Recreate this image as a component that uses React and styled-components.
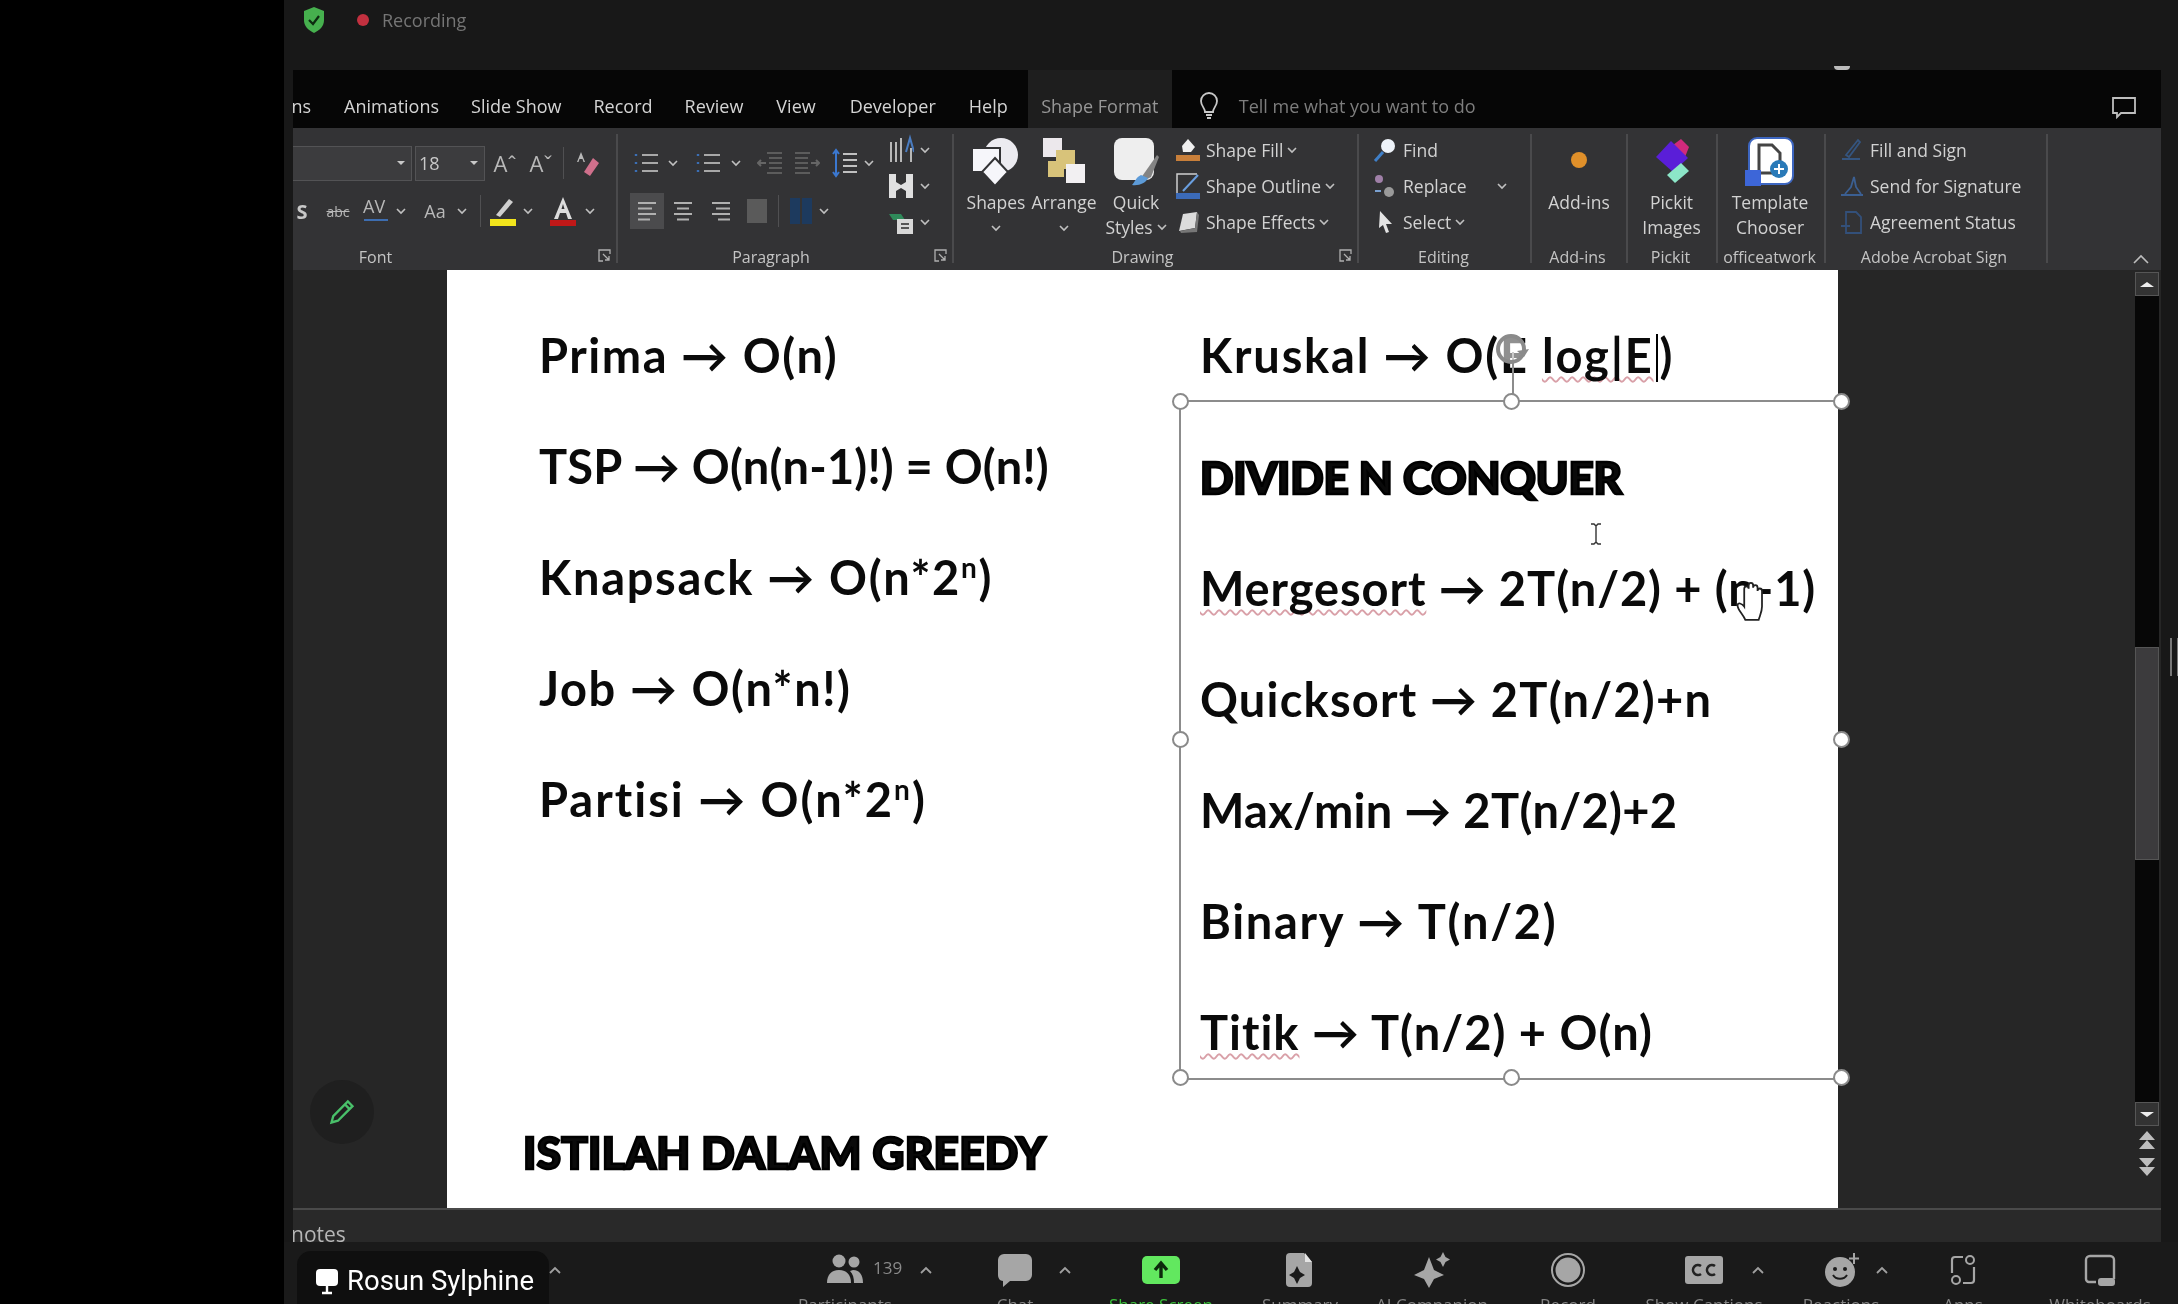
import React from "react";
import styled, { createGlobalStyle } from "styled-components";

const GlobalStyle = createGlobalStyle`
  html, body { margin: 0; padding: 0; background: #000; overflow: hidden; }
  #root { width: 2178px; height: 1304px; }
`;

const Screen = styled.div`
  position: relative;
  width: 2178px;
  height: 1304px;
  display: flex;
  overflow: hidden;
  background: #000;
  font-family: "Open Sans", "Liberation Sans", sans-serif;
  filter: blur(0.6px);
`;
const LeftBlack = styled.div`
  width: 284px;
  flex: none;
  background: #000;
`;
const Meeting = styled.div`
  width: 1894px;
  flex: none;
  display: flex;
  flex-direction: column;
  background: #181818;
`;
const TopBar = styled.div`
  height: 70px;
  flex: none;
  display: flex;
  align-items: flex-start;
  padding: 6px 0 0 18px;
  gap: 31px;
  box-sizing: border-box;
  position: relative;
`;
const RecBadge = styled.div`
  display: flex;
  align-items: center;
  gap: 13px;
  height: 28px;
  color: #757575;
  font-size: 18px;
`;
const RecDot = styled.span`
  width: 12px;
  height: 12px;
  border-radius: 50%;
  background: #c2303f;
`;
const Shield = styled.svg`
  width: 24px;
  height: 28px;
`;
const CamGlint = styled.span`
  position: absolute;
  left: 1550px;
  top: 66px;
  width: 16px;
  height: 4px;
  border-radius: 0 0 6px 6px;
  background: #bbb;
`;
const Window = styled.div`
  margin-left: 9px;
  width: 1868px;
  flex: none;
  display: flex;
  flex-direction: column;
`;
const TabRow = styled.div`
  height: 58px;
  background: #060606;
  display: flex;
  align-items: stretch;
  font-size: 18px;
  color: #d4d4d4;
  position: relative;
`;
const Tab = styled.div`
  margin-left: ${(p) => p.$ml || 0}px;
  padding-top: 14px;
  box-sizing: border-box;
  display: flex;
  align-items: center;
  white-space: nowrap;
  ${(p) => p.$w && `width: ${p.$w}px; justify-content: center;`}
  ${(p) => p.$active && "background: #1e1e1e; color: #969696;"}
  ${(p) => p.$dim && "color: #7d7d7d;"}
`;
const ClippedTab = styled(Tab)`
  width: 18px;
  overflow: hidden;
  justify-content: flex-end;
`;
const TabIcon = styled.svg`
  margin: 14px 0 0 ${(p) => p.$ml}px;
  align-self: center;
  width: ${(p) => p.$w || 24}px;
  height: 28px;
  flex: none;
`;
const Ribbon = styled.div`
  height: 142px;
  flex: none;
  background: #333335;
  display: flex;
  position: relative;
  color: #d6d6d6;
  font-size: 17.5px;
`;
const Group = styled.div`
  width: ${(p) => p.$w}px;
  flex: none;
  box-sizing: border-box;
  display: flex;
  flex-direction: column;
  position: relative;
  ${(p) =>
    !p.$end &&
    `&::after { content: ""; position: absolute; right: 0; top: 6px; bottom: 7px; width: 2px; background: #4a4a4c; }`}
`;
const GroupBody = styled.div`
  height: 117px;
  flex: none;
  display: flex;
  padding-left: ${(p) => p.$pl || 0}px;
  box-sizing: border-box;
`;
const GroupLabel = styled.div`
  text-align: center;
  font-size: 16px;
  line-height: 24px;
  color: #c4c4c4;
  padding-right: ${(p) => p.$pr || 0}px;
  white-space: nowrap;
`;
const Launcher = styled.svg`
  position: absolute;
  right: 7px;
  bottom: 8px;
  width: 13px;
  height: 13px;
`;
const Stack = styled.div`
  display: flex;
  flex-direction: column;
  margin-left: ${(p) => p.$ml || 0}px;
  padding-top: ${(p) => p.$pt ?? 17}px;
  gap: ${(p) => p.$gap ?? 12}px;
`;
const Row = styled.div`
  display: flex;
  align-items: center;
  height: ${(p) => p.$h || 36}px;
`;
const SelectBox = styled.div`
  width: ${(p) => p.$w}px;
  height: 35px;
  margin-left: ${(p) => p.$ml || 0}px;
  box-sizing: border-box;
  background: #3c3c3e;
  border: 1px solid #535355;
  border-left: ${(p) => (p.$open ? "none" : "1px solid #535355")};
  display: flex;
  align-items: center;
  justify-content: space-between;
  padding: 0 6px 0 3px;
  font-size: 18px;
  color: #c8c8c8;
`;
const TriDown = styled.span`
  margin-left: auto;
  width: 0;
  height: 0;
  border-left: 4px solid transparent;
  border-right: 4px solid transparent;
  border-top: 4px solid #c8c8c8;
`;
const Tool = styled.div`
  width: ${(p) => p.$w}px;
  margin-left: ${(p) => p.$ml || 0}px;
  height: 36px;
  flex: none;
  display: flex;
  align-items: center;
  justify-content: center;
  color: ${(p) => p.$color || "#b8b8b8"};
  font-size: ${(p) => p.$fs || 18}px;
  font-weight: ${(p) => p.$fw || 400};
  ${(p) => p.$on && "background: #4b4b4d;"}
  white-space: nowrap;
`;
const MiniSep = styled.span`
  width: 1px;
  height: 32px;
  margin-left: ${(p) => p.$ml || 0}px;
  background: #505052;
  flex: none;
`;
const Big = styled.div`
  width: ${(p) => p.$w}px;
  margin-left: ${(p) => p.$ml || 0}px;
  flex: none;
  display: flex;
  flex-direction: column;
  align-items: center;
  padding-top: 9px;
  line-height: 25px;
  color: #d2d2d2;
`;
const BigIcon = styled.svg`
  width: ${(p) => p.$s || 50}px;
  height: 50px;
  margin-bottom: 3px;
  flex: none;
`;
const InlineRow = styled.span`
  display: flex;
  align-items: center;
  gap: 4px;
  white-space: nowrap;
`;
const ListItem = styled.div`
  display: flex;
  align-items: center;
  height: 26px;
  white-space: nowrap;
  color: ${(p) => p.$color || "#d2d2d2"};
`;
const ListIcon = styled.svg`
  width: 24px;
  height: 26px;
  margin-right: ${(p) => p.$mr ?? 6}px;
  flex: none;
`;
const Chevron = styled.svg`
  width: 10px;
  height: 7px;
  flex: none;
  margin-left: ${(p) => p.$ml || 0}px;
  margin-top: ${(p) => p.$mt || 0}px;
`;
const CollapseBtn = styled.svg`
  position: absolute;
  right: 12px;
  bottom: 6px;
  width: 16px;
  height: 10px;
`;
const Workspace = styled.div`
  height: 938px;
  flex: none;
  display: flex;
  background: #262626;
  position: relative;
`;
const Slide = styled.div`
  margin-left: 154px;
  width: 1391px;
  height: 938px;
  flex: none;
  position: relative;
  background: #fff;
  display: grid;
  grid-template-columns: 706px 1fr;
  padding-top: 30px;
  box-sizing: border-box;
  color: #0a0a0a;
  font-family: "Lato", "DejaVu Sans", sans-serif;
`;
const Column = styled.div`
  padding-left: ${(p) => p.$pl}px;
  display: flex;
  flex-direction: column;
`;
const Line = styled.div`
  height: 111px;
  line-height: 111px;
  font-size: 47px;
  font-weight: 700;
  letter-spacing: ${(p) => 1.2 + (p.$ls || 0)}px;
  white-space: nowrap;
  sup {
    font-size: 28px;
    line-height: 0;
  }
`;
const Heading = styled.div`
  height: 111px;
  line-height: 111px;
  font-size: 44px;
  font-weight: 900;
  letter-spacing: ${(p) => p.$ls ?? -0.2}px;
  -webkit-text-stroke: 2.5px #000;
  white-space: nowrap;
  margin: ${(p) => p.$mt || 0}px 0 0 ${(p) => p.$ml || 0}px;
`;
const Squiggle = styled.span`
  text-decoration: underline wavy #d9a0a8 2px;
  text-underline-offset: 3px;
  text-decoration-skip-ink: none;
`;
const Caret = styled.span`
  display: inline-block;
  width: 2px;
  height: 48px;
  background: #000;
  vertical-align: -9px;
  margin: 0 2px;
`;
const Selection = styled.div`
  position: absolute;
  left: 732px;
  top: 130px;
  width: 663px;
  height: 680px;
  box-sizing: border-box;
  border: 2px solid #8c8c8c;
  border-right: none;
  pointer-events: none;
`;
const Handle = styled.span`
  position: absolute;
  left: ${(p) => p.$x}%;
  top: ${(p) => p.$y}%;
  width: 17px;
  height: 17px;
  margin: -9px 0 0 -9px;
  box-sizing: border-box;
  border-radius: 50%;
  background: #fff;
  border: 2.5px solid #8a8a8a;
`;
const RotateStem = styled.span`
  position: absolute;
  left: 50%;
  top: -50px;
  width: 2px;
  height: 48px;
  background: #8c8c8c;
`;
const RotateIcon = styled.svg`
  position: absolute;
  left: calc(50% - 19px);
  top: -71px;
  width: 38px;
  height: 38px;
`;
const CursorIcon = styled.svg`
  position: absolute;
  left: ${(p) => p.$x}px;
  top: ${(p) => p.$y}px;
  width: ${(p) => p.$w}px;
  height: ${(p) => p.$h}px;
`;
const Scrollbar = styled.div`
  margin-left: 297px;
  width: 24px;
  flex: none;
  display: flex;
  flex-direction: column;
  padding-top: 2px;
`;
const ScrollBtn = styled.div`
  height: 24px;
  box-sizing: border-box;
  flex: none;
  background: #333;
  border: 1px solid #565656;
  display: flex;
  align-items: center;
  justify-content: center;
  &::before {
    content: "";
    border-left: 7px solid transparent;
    border-right: 7px solid transparent;
    ${(p) => (p.$down ? "border-top: 5px solid #eee;" : "border-bottom: 5px solid #eee;")}
  }
`;
const ScrollTrack = styled.div`
  flex: none;
  height: 806px;
  background: #070707;
  padding-top: 351px;
  box-sizing: border-box;
`;
const ScrollThumb = styled.div`
  height: 213px;
  box-sizing: border-box;
  background: #3c3b3d;
  border: 1px solid #555;
`;
const PageJump = styled.svg`
  width: 24px;
  height: 22px;
  margin-top: ${(p) => p.$mt}px;
  flex: none;
`;
const Grip = styled.span`
  position: absolute;
  left: 1877px;
  top: 368px;
  width: 5px;
  height: 38px;
  border-left: 2px solid #777;
  border-right: 2px solid #777;
`;
const Notes = styled.div`
  height: 34px;
  flex: none;
  box-sizing: border-box;
  background: #292929;
  border-top: 2px solid #4a4a4a;
  font-size: 21px;
  line-height: 48px;
  text-indent: -2px;
  color: #b6b6b6;
  overflow: hidden;
  white-space: nowrap;
`;
const Toolbar = styled.div`
  height: 62px;
  flex: none;
  background: #1a1a1a;
  display: flex;
  padding-left: 16px;
`;
const ToolItem = styled.div`
  width: ${(p) => p.$w}px;
  margin-left: ${(p) => p.$ml || 0}px;
  flex: none;
  position: relative;
  display: flex;
  flex-direction: column;
  align-items: center;
  padding-top: 10px;
  color: ${(p) => (p.$green ? "#3cc43c" : "#858585")};
  font-size: 17px;
  line-height: 24px;
  white-space: nowrap;
`;
const ToolIcon = styled.svg`
  width: 40px;
  height: 36px;
  margin-bottom: 5px;
  flex: none;
`;
const ToolCaret = styled.svg`
  position: absolute;
  left: ${(p) => p.$x - 6}px;
  top: 24px;
  width: 12px;
  height: 8px;
`;
const ToolCount = styled.span`
  position: absolute;
  left: 88px;
  top: 14px;
  font-size: 17px;
  line-height: 24px;
  color: #8a8a8a;
`;
const NameTag = styled.div`
  position: absolute;
  left: 297px;
  top: 1251px;
  width: 252px;
  height: 53px;
  box-sizing: border-box;
  padding: 6px 0 0 18px;
  border-radius: 14px 14px 0 0;
  background: #0f0f0f;
  display: flex;
  align-items: center;
  gap: 8px;
  color: #fff;
  font-family: "Roboto", sans-serif;
  font-size: 27.500px;
`;
const NameIcon = styled.svg`
  width: 24px;
  height: 30px;
  flex: none;
`;
const PenButton = styled.div`
  position: absolute;
  left: 310px;
  top: 1080px;
  width: 64px;
  height: 64px;
  border-radius: 50%;
  background: #1f1f1f;
  display: flex;
  align-items: center;
  justify-content: center;
`;

const Chev = ({ ml, mt, up }) => (
  <Chevron $ml={ml} $mt={mt} viewBox="0 0 10 7">
    <path d={up ? "M1 6l4-4 4 4" : "M1 1l4 4 4-4"} fill="none" stroke="#c0c0c0" strokeWidth="1.6" />
  </Chevron>
);

const LauncherIcon = () => (
  <Launcher viewBox="0 0 13 13">
    <path d="M12 5V1H1v11h4M5 5l6 6M7 11h4V7" fill="none" stroke="#b0b0b0" strokeWidth="1.3" />
  </Launcher>
);

const Lines = ({ color = "#b0b0b0", rows, w = 26 }) => (
  <svg width={w} height="26" viewBox={`0 0 ${w} 26`}>
    {rows.map(([x1, x2], i) => (
      <rect key={i} x={x1} y={4 + i * 5.5} width={x2 - x1} height="2" fill={color} />
    ))}
  </svg>
);

const BulletList = ({ dots }) => (
  <svg width="26" height="26" viewBox="0 0 26 26">
    <path d="M8 5h16M8 13h16M8 21h16" stroke="#a8a8a8" strokeWidth="2" />
    <path d="M2 4v2M2 12v2M2 20v2" stroke={dots} strokeWidth="2.4" />
  </svg>
);

const IndentIcon = ({ flip }) => (
  <svg width="26" height="26" viewBox="0 0 26 26" style={flip ? { transform: "scaleX(-1)" } : undefined}>
    <path d="M10 3h15M12 8h13M12 13h13M12 18h13M10 23h15" stroke="#5c5c5c" strokeWidth="2" />
    <path d="M9 13H1m3-3l-3 3 3 3" fill="none" stroke="#666" strokeWidth="2" />
  </svg>
);

const ToolIconSvg = ({ name }) => {
  const c = "#a6a6a6";
  switch (name) {
    case "mic":
      return (
        <ToolIcon viewBox="0 0 40 36">
          <rect x="14" y="3" width="12" height="24" rx="6" fill="#666" />
          <path d="M10 32L30 2" stroke="#a02030" strokeWidth="2" />
        </ToolIcon>
      );
    case "video":
      return (
        <ToolIcon viewBox="0 0 40 36">
          <rect x="4" y="8" width="24" height="22" rx="4" fill="#666" />
          <path d="M8 34L34 2" stroke="#a02030" strokeWidth="2" />
        </ToolIcon>
      );
    case "people":
      return (
        <ToolIcon viewBox="0 0 40 36">
          <circle cx="14" cy="9" r="6.5" fill={c} />
          <circle cx="29" cy="10" r="5.5" fill={c} />
          <path d="M2 31c0-9 5-13 12-13s12 4 12 13z" fill={c} />
          <path d="M28 18c6 0 10 4 10 13h-9c0-5-1-9-4-12z" fill={c} />
        </ToolIcon>
      );
    case "chat":
      return (
        <ToolIcon viewBox="0 0 40 36">
          <path d="M9 2h22a6 6 0 016 6v15a6 6 0 01-6 6H15l-7 6v-6a6 6 0 01-5-6V8a6 6 0 016-6z" fill={c} />
        </ToolIcon>
      );
    case "share":
      return (
        <ToolIcon viewBox="0 0 40 36">
          <rect x="1" y="4" width="38" height="28" rx="5" fill="#62e85f" />
          <path d="M20 26V12m-6 6l6-7 6 7" fill="none" stroke="#0c2a0c" strokeWidth="3.4" />
        </ToolIcon>
      );
    case "summary":
      return (
        <ToolIcon viewBox="0 0 40 36">
          <path d="M10 1h14l8 9v21a4 4 0 01-4 4H10a4 4 0 01-4-4V5a4 4 0 014-4z" fill={c} />
          <path d="M25 1l7 9h-7z" fill="#e4e4e4" />
          <path d="M17 14l3 6 5 3-5 3-3 6-3-6-5-3 5-3z" fill="#1a1a1a" />
        </ToolIcon>
      );
    case "ai":
      return (
        <ToolIcon viewBox="0 0 40 36">
          <path d="M17 5l5 13 10 5-10 4-5 9-5-9-10-4 10-5z" fill={c} />
          <path d="M31 0l2.5 5L38 7.5 33.5 10 31 15l-2.5-5L24 7.500l4.500-2.500z" fill={c} />
        </ToolIcon>
      );
    case "record":
      return (
        <ToolIcon viewBox="0 0 40 36">
          <circle cx="20" cy="18" r="16" fill="none" stroke={c} strokeWidth="2" />
          <circle cx="20" cy="18" r="12.500" fill={c} />
        </ToolIcon>
      );
    case "cc":
      return (
        <ToolIcon viewBox="0 0 40 36">
          <rect x="1" y="4" width="38" height="28" rx="3" fill={c} />
          <path d="M17 14a5 5 0 100 8M31 14a5 5 0 100 8" fill="none" stroke="#222" strokeWidth="2.600" />
        </ToolIcon>
      );
    case "smile":
      return (
        <ToolIcon viewBox="0 0 40 36">
          <circle cx="19" cy="20" r="15" fill={c} />
          <circle cx="14" cy="17" r="2" fill="#1a1a1a" />
          <circle cx="24" cy="17" r="2" fill="#1a1a1a" />
          <path d="M12 23c3 5 11 5 14 0" fill="none" stroke="#1a1a1a" strokeWidth="2" />
          <path d="M33 1v11M28 6.500h10" stroke={c} strokeWidth="2" />
        </ToolIcon>
      );
    case "apps":
      return (
        <ToolIcon viewBox="0 0 40 36">
          <path d="M9 21V8a3 3 0 013-3h8M31 15v13a3 3 0 01-3 3h-8" fill="none" stroke={c} strokeWidth="2.200" />
          <circle cx="27" cy="8" r="4" fill="none" stroke={c} strokeWidth="2" />
          <circle cx="13" cy="28" r="4" fill="none" stroke={c} strokeWidth="2" />
        </ToolIcon>
      );
    default:
      return (
        <ToolIcon viewBox="0 0 40 36">
          <path d="M6 27V8a4 4 0 014-4h20a4 4 0 014 4v19" fill="none" stroke={c} strokeWidth="2.400" />
          <path d="M6 27a3 3 0 003 3h7" fill="none" stroke={c} strokeWidth="2.400" />
          <rect x="18" y="26" width="17" height="8" rx="3" fill={c} />
        </ToolIcon>
      );
  }
};

const bottomTools = [
  { label: "Unmute", icon: "mic", w: 110 },
  { label: "Start Video", icon: "video", w: 100, ml: 38, caret: 107 },
  { label: "Participants", icon: "people", w: 120, ml: 237, caret: 141, count: "139" },
  { label: "Chat", icon: "chat", w: 80, ml: 70, caret: 90 },
  { label: "Share Screen", icon: "share", w: 130, ml: 41, green: true },
  { label: "Summary", icon: "summary", w: 100, ml: 24 },
  { label: "AI Companion", icon: "ai", w: 140, ml: 12 },
  { label: "Record", icon: "record", w: 90, ml: 21 },
  { label: "Show Captions", icon: "cc", w: 130, ml: 26, caret: 119 },
  { label: "Reactions", icon: "smile", w: 110, ml: 17, caret: 96 },
  { label: "Apps", icon: "apps", w: 70, ml: 32 },
  { label: "Whiteboards", icon: "board", w: 130, ml: 37 },
];

const App = () => {
  return (
    <Screen>
      <GlobalStyle />
      <LeftBlack />
      <Meeting>
        <TopBar>
          <Shield viewBox="0 0 24 28">
            <path d="M12 1l10 4v9c0 6-4 10-10 13C6 24 2 20 2 14V5z" fill="#46b04e" />
            <path d="M7 14l4 4 6-8" fill="none" stroke="#0d2b10" strokeWidth="2.200" />
          </Shield>
          <RecBadge>
            <RecDot />
            Recording
          </RecBadge>
          <CamGlint />
        </TopBar>
        <Window>
          <TabRow>
            <ClippedTab>ns</ClippedTab>
            <Tab $ml={33}>Animations</Tab>
            <Tab $ml={32}>Slide Show</Tab>
            <Tab $ml={32}>Record</Tab>
            <Tab $ml={32}>Review</Tab>
            <Tab $ml={33}>View</Tab>
            <Tab $ml={34}>Developer</Tab>
            <Tab $ml={33}>Help</Tab>
            <Tab $ml={20} $w={144} $active>
              Shape Format
            </Tab>
            <TabIcon $ml={25} viewBox="0 0 24 28">
              <path
                d="M8 20c0-4-4-6-4-11a8 8 0 0116 0c0 5-4 7-4 11zM9 23h6M10 26h4"
                fill="none"
                stroke="#c8c8c8"
                strokeWidth="1.800"
              />
            </TabIcon>
            <Tab $ml={18} $dim>
              Tell me what you want to do
            </Tab>
            <TabIcon $ml={636} $w={26} viewBox="0 0 26 28">
              <path d="M2 6h22v15H10l-4 4v-4H2z" fill="none" stroke="#bdbdbd" strokeWidth="1.800" />
            </TabIcon>
          </TabRow>
          <Ribbon>
            <Group $w={325}>
              <GroupBody>
                <Stack>
                  <Row>
                    <SelectBox $w={119} $open>
                      <TriDown />
                    </SelectBox>
                    <SelectBox $w={70} $ml={3}>
                      18
                      <TriDown />
                    </SelectBox>
                    <Tool $w={36} $ml={2} $fs={22}>
                      Aˆ
                    </Tool>
                    <Tool $w={36} $fs={22}>
                      Aˇ
                    </Tool>
                    <MiniSep $ml={4} />
                    <Tool $w={46}>
                      <svg width="26" height="30" viewBox="0 0 26 30">
                        <path d="M10 24l9-14 6 5-9 13z" fill="#d0708c" />
                        <path d="M7 4L3 14h1.500l1-3h3l1 3H11z" fill="#b8b8b8" />
                      </svg>
                    </Tool>
                  </Row>
                  <Row>
                    <Tool $w={18} $fw={700} $fs={20} $color="#c8c8c8">
                      S
                    </Tool>
                    <Tool $w={36} $ml={9} $fs={14}>
                      <s>abc</s>
                    </Tool>
                    <Tool $w={40}>
                      <svg width="30" height="30" viewBox="0 0 30 30">
                        <text x="2" y="17" fontSize="18" fill="#b8b8b8" fontFamily="Open Sans">
                          AV
                        </text>
                        <path d="M3 24h24" stroke="#3d6db0" strokeWidth="2" />
                      </svg>
                    </Tool>
                    <Chev />
                    <Tool $w={44} $ml={7}>
                      Aa
                    </Tool>
                    <Chev />
                    <MiniSep $ml={13} />
                    <Tool $w={36} $ml={4}>
                      <svg width="28" height="32" viewBox="0 0 28 32">
                        <path d="M7 20L20 4l4 3-13 15z" fill="#cfcfcf" />
                        <rect x="1" y="24" width="26" height="7" fill="#f2e51c" />
                      </svg>
                    </Tool>
                    <Chev ml={2} />
                    <Tool $w={36} $ml={12} $fs={26} $color="#ddd">
                      <svg width="28" height="32" viewBox="0 0 28 32">
                        <path d="M14 2L5 24h4l2-6h6l2 6h4zM12.500 14L14 9l1.500 5z" fill="#dcdcdc" />
                        <rect x="1" y="25" width="26" height="6" fill="#c01818" />
                      </svg>
                    </Tool>
                    <Chev ml={4} />
                  </Row>
                </Stack>
              </GroupBody>
              <GroupLabel $pr={160}>Font</GroupLabel>
              <LauncherIcon />
            </Group>
            <Group $w={336}>
              <GroupBody $pl={14}>
                <Stack>
                  <Row>
                    <Tool $w={30}>
                      <BulletList dots="#3b6fb5" />
                    </Tool>
                    <Chev ml={6} />
                    <Tool $w={30} $ml={16}>
                      <BulletList dots="#3b6fb5" />
                    </Tool>
                    <Chev ml={7} />
                    <Tool $w={30} $ml={14}>
                      <IndentIcon />
                    </Tool>
                    <Tool $w={30} $ml={7}>
                      <IndentIcon flip />
                    </Tool>
                    <Tool $w={30} $ml={8}>
                      <svg width="26" height="30" viewBox="0 0 26 30">
                        <path d="M11 6h14M11 12h14M11 18h14M11 24h14" stroke="#c0c0c0" strokeWidth="2" />
                        <path d="M4 3v24M1 6l3-4 3 4M1 24l3 4 3-4" fill="none" stroke="#3b78d0" strokeWidth="2" />
                      </svg>
                    </Tool>
                    <Chev ml={4} />
                  </Row>
                  <Row>
                    <Tool $w={34} $on $ml={-2}>
                      <Lines rows={[[4, 22], [4, 18], [4, 22], [4, 16]]} />
                    </Tool>
                    <Tool $w={30} $ml={4}>
                      <Lines rows={[[4, 22], [7, 19], [4, 22], [7, 19]]} />
                    </Tool>
                    <Tool $w={30} $ml={8}>
                      <Lines rows={[[4, 22], [8, 22], [4, 22], [10, 22]]} />
                    </Tool>
                    <Tool $w={24} $ml={9}>
                      <svg width="20" height="24" viewBox="0 0 20 24">
                        <rect width="20" height="24" fill="#5a5a5a" />
                      </svg>
                    </Tool>
                    <MiniSep $ml={9} />
                    <Tool $w={24} $ml={10}>
                      <svg width="22" height="26" viewBox="0 0 22 26">
                        <rect width="10" height="26" fill="#1d3a5e" />
                        <rect x="12" width="10" height="26" fill="#1d3a5e" />
                      </svg>
                    </Tool>
                    <Chev ml={6} />
                  </Row>
                </Stack>
                <Stack $ml={14} $pt={4} $gap={0}>
                  <Row>
                    <Tool $w={26} $ml={0}>
                      <svg width="26" height="32" viewBox="0 0 26 32">
                        <path d="M3 8v20M8 8v20M13 4v24M23 14v14" stroke="#b8b8b8" strokeWidth="2" />
                        <path d="M18 18L22 4l4 14" fill="none" stroke="#4a7cc0" strokeWidth="2" />
                      </svg>
                    </Tool>
                    <Chev ml={6} />
                  </Row>
                  <Row>
                    <Tool $w={26}>
                      <svg width="26" height="28" viewBox="0 0 26 28">
                        <path d="M1 2h7v8l5 3 5-3V2h7v24h-7v-7l-5-3-5 3v7H1z" fill="#e0e0e0" />
                      </svg>
                    </Tool>
                    <Chev ml={6} />
                  </Row>
                  <Row>
                    <Tool $w={26}>
                      <svg width="26" height="28" viewBox="0 0 26 28">
                        <path d="M1 6h12l4 6H5z" fill="#2f8a5a" />
                        <rect x="9" y="11" width="16" height="15" fill="#d8d8d8" />
                        <path d="M13 16h8M13 20h8" stroke="#555" strokeWidth="2" />
                      </svg>
                    </Tool>
                    <Chev ml={6} />
                  </Row>
                </Stack>
              </GroupBody>
              <GroupLabel $pr={30}>Paragraph</GroupLabel>
              <LauncherIcon />
            </Group>
            <Group $w={405}>
              <GroupBody $pl={12}>
                <Big $w={60}>
                  <BigIcon viewBox="0 0 50 50">
                    <circle cx="30" cy="18" r="17" fill="#ecebf0" />
                    <path d="M1 11h28v24H1z" fill="#f6f6fa" stroke="#333335" strokeWidth="2" />
                    <path d="M24 21l13 14-13 14-13-14z" fill="#f6f6fa" stroke="#333335" strokeWidth="2" />
                  </BigIcon>
                  Shapes
                  <Chev mt={10} />
                </Big>
                <Big $w={70} $ml={3}>
                  <BigIcon viewBox="0 0 50 50">
                    <rect x="4" y="1" width="19" height="19" fill="#ece8ec" />
                    <rect x="17" y="13" width="19" height="19" fill="#d8c37a" />
                    <rect x="9" y="24" width="16" height="16" fill="#d8c37a" />
                    <rect x="27" y="27" width="19" height="19" fill="#f2f0f2" />
                  </BigIcon>
                  Arrange
                  <Chev mt={10} />
                </Big>
                <Big $w={74}>
                  <BigIcon viewBox="0 0 50 50">
                    <rect x="3" y="1" width="40" height="42" rx="8" fill="#eeeeee" />
                    <path d="M46 18L32 38l-7 10 15-8 8-20z" fill="#848484" />
                    <path d="M30 38c-5 2-6 7-9 10 7 1 14-2 16-7z" fill="#5d9bd8" />
                  </BigIcon>
                  Quick
                  <InlineRow>
                    Styles
                    <Chev />
                  </InlineRow>
                </Big>
                <Stack $ml={3} $pt={9} $gap={10}>
                  <ListItem>
                    <ListIcon viewBox="0 0 24 26">
                      <path d="M12 2l7 8-4 5H7l-1-6z" fill="#f0f0f0" />
                      <rect x="0" y="18" width="24" height="6" fill="#c87f3a" />
                    </ListIcon>
                    <InlineRow>
                      Shape Fill
                      <Chev />
                    </InlineRow>
                  </ListItem>
                  <ListItem>
                    <ListIcon viewBox="0 0 24 26">
                      <path d="M1 20V1h20" fill="none" stroke="#cfcfcf" strokeWidth="1.500" />
                      <path d="M7 18L22 2" stroke="#6a9fe0" strokeWidth="2" />
                      <rect x="0" y="20" width="24" height="6" fill="#3b6ab8" />
                    </ListIcon>
                    <InlineRow>
                      Shape Outline
                      <Chev />
                    </InlineRow>
                  </ListItem>
                  <ListItem>
                    <ListIcon viewBox="0 0 24 26">
                      <path d="M7 5l14-2-2 16-16 3z" fill="#dcdcdc" />
                      <path d="M4 22l15-3 2-16 2 3-2 17-16 1z" fill="#777" />
                    </ListIcon>
                    <InlineRow>
                      Shape Effects
                      <Chev />
                    </InlineRow>
                  </ListItem>
                </Stack>
              </GroupBody>
              <GroupLabel $pr={28}>Drawing</GroupLabel>
              <LauncherIcon />
            </Group>
            <Group $w={173}>
              <GroupBody $pl={14}>
                <Stack $pt={9} $gap={10}>
                  <ListItem>
                    <ListIcon viewBox="0 0 24 26">
                      <circle cx="15" cy="9" r="7" fill="#eef3fa" />
                      <path d="M10 15L2 24" stroke="#3f7fc8" strokeWidth="3" />
                    </ListIcon>
                    Find
                  </ListItem>
                  <ListItem>
                    <ListIcon viewBox="0 0 24 26">
                      <circle cx="6" cy="6" r="4" fill="#a080a8" />
                      <path d="M2 18h6" stroke="#7aa0d0" strokeWidth="2" />
                      <circle cx="16" cy="19" r="5" fill="#9a9a9a" />
                    </ListIcon>
                    Replace
                    <Chev ml={30} />
                  </ListItem>
                  <ListItem>
                    <ListIcon viewBox="0 0 24 26">
                      <path d="M7 2l12 13h-6l3 8-3 1-3-8-4 3z" fill="#e4e4e4" />
                    </ListIcon>
                    <InlineRow>
                      Select
                      <Chev />
                    </InlineRow>
                  </ListItem>
                </Stack>
              </GroupBody>
              <GroupLabel $pr={4}>Editing</GroupLabel>
            </Group>
            <Group $w={96}>
              <GroupBody>
                <Big $w={94}>
                  <BigIcon viewBox="0 0 50 50">
                    <circle cx="25" cy="23" r="8" fill="#e0902a" />
                  </BigIcon>
                  Add-ins
                </Big>
              </GroupBody>
              <GroupLabel $pr={5}>Add-ins</GroupLabel>
            </Group>
            <Group $w={90}>
              <GroupBody>
                <Big $w={87}>
                  <BigIcon viewBox="0 0 50 50">
                    <path d="M26 8l8-6 8 8-4 10z" fill="#d02a7c" />
                    <path d="M24 4l17 17-15 14L9 20z" fill="#5a1ed8" />
                    <path d="M34 26l8 8-14 12-8-8z" fill="#8ce6c8" />
                  </BigIcon>
                  Pickit
                  <span>Images</span>
                </Big>
              </GroupBody>
              <GroupLabel $pr={5}>Pickit</GroupLabel>
            </Group>
            <Group $w={108}>
              <GroupBody>
                <Big $w={104}>
                  <BigIcon viewBox="0 0 50 50">
                    <rect x="4" y="1" width="44" height="46" rx="8" fill="#fff" stroke="#3d66c0" strokeWidth="2" />
                    <path d="M14 8h13l8 8v20H14z" fill="none" stroke="#444" strokeWidth="3" />
                    <circle cx="34" cy="32" r="9" fill="#2a7ab8" />
                    <path d="M34 27v10M29 32h10" stroke="#fff" strokeWidth="2" />
                    <rect x="0" y="33" width="16" height="16" fill="#3d66d8" />
                  </BigIcon>
                  Template
                  <span>Chooser</span>
                </Big>
              </GroupBody>
              <GroupLabel $pr={5}>officeatwork</GroupLabel>
            </Group>
            <Group $w={222}>
              <GroupBody $pl={14}>
                <Stack $pt={9} $gap={10}>
                  <ListItem>
                    <ListIcon viewBox="0 0 24 26">
                      <path d="M2 22h18M6 18L18 3l2 2L9 20z" fill="none" stroke="#35557f" strokeWidth="1.800" />
                    </ListIcon>
                    Fill and Sign
                  </ListItem>
                  <ListItem>
                    <ListIcon viewBox="0 0 24 26">
                      <path d="M1 22h22M5 21l6-7 3-10 2 10 5 7" fill="none" stroke="#3b5f92" strokeWidth="1.800" />
                    </ListIcon>
                    Send for Signature
                  </ListItem>
                  <ListItem>
                    <ListIcon viewBox="0 0 24 26">
                      <path d="M6 3h10l5 5v16H6zM1 17h9" fill="none" stroke="#33507a" strokeWidth="1.800" />
                    </ListIcon>
                    Agreement Status
                  </ListItem>
                </Stack>
              </GroupBody>
              <GroupLabel $pr={6}>Adobe Acrobat Sign</GroupLabel>
            </Group>
            <CollapseBtn viewBox="0 0 16 10">
              <path d="M1 9l7-7 7 7" fill="none" stroke="#bdbdbd" strokeWidth="1.600" />
            </CollapseBtn>
          </Ribbon>
          <Workspace>
            <Slide>
              <Column $pl={92}>
                <Line $ls={0.35}>Prima → O(n)</Line>
                <Line $ls={-1}>TSP → O(n(n-1)!) = O(n!)</Line>
                <Line $ls={0.5}>
                  Knapsack → O(n*2<sup>n</sup>)
                </Line>
                <Line $ls={0.4}>Job → O(n*n!)</Line>
                <Line $ls={0.8}>
                  Partisi → O(n*2<sup>n</sup>)
                </Line>
                <Heading $mt={242} $ml={-16} $ls={0.3}>
                  ISTILAH DALAM GREEDY
                </Heading>
              </Column>
              <Column $pl={47}>
                <Line $ls={0.6}>
                  Kruskal → O(E <Squiggle>log|E</Squiggle>
                  <Caret />)
                </Line>
                <Heading $mt={11}>DIVIDE N CONQUER</Heading>
                <Line $ls={-0.3}>
                  <Squiggle>Mergesort</Squiggle> → 2T(n/2) + (n-1)
                </Line>
                <Line>Quicksort → 2T(n/2)+n</Line>
                <Line $ls={-0.9}>Max/min → 2T(n/2)+2</Line>
                <Line $ls={0.5}>Binary → T(n/2)</Line>
                <Line $ls={-0.2}>
                  <Squiggle>Titik</Squiggle> → T(n/2) + O(n)
                </Line>
              </Column>
              <Selection>
                <RotateStem />
                <RotateIcon viewBox="0 0 38 38">
                  <circle cx="18" cy="18" r="13" fill="rgba(255,255,255,0.55)" stroke="#8a8a8a" strokeWidth="4" />
                  <path d="M24 20l7 6 5-8" fill="#8a8a8a" />
                </RotateIcon>
                <Handle $x={0} $y={0} />
                <Handle $x={50} $y={0} />
                <Handle $x={100} $y={0} />
                <Handle $x={0} $y={50} />
                <Handle $x={100} $y={50} />
                <Handle $x={0} $y={100} />
                <Handle $x={50} $y={100} />
                <Handle $x={100} $y={100} />
              </Selection>
              <CursorIcon $x={1142} $y={253} $w={14} $h={22} viewBox="0 0 14 22">
                <path d="M2 1h3l2 2 2-2h3M7 3v16M2 21h3l2-2 2 2h3" fill="none" stroke="#333" strokeWidth="1.400" />
              </CursorIcon>
              <CursorIcon $x={1288} $y={311} $w={34} $h={40} viewBox="0 0 30 36">
                <path
                  d="M9 35c-2-5-7-9-7-13 0-3 4-2 6 1V7c0-3 4-3 4 0V4c0-3 4-3 4 0v2c0-3 4-3 4 0v3c0-3 4-3 4 0v14c0 5-2 8-3 12z"
                  fill="#fff"
                  stroke="#222"
                  strokeWidth="1.600"
                />
              </CursorIcon>
            </Slide>
            <Scrollbar>
              <ScrollBtn />
              <ScrollTrack>
                <ScrollThumb />
              </ScrollTrack>
              <ScrollBtn $down />
              <PageJump $mt={4} viewBox="0 0 24 22">
                <path d="M12 1l8 9H4zM12 10l8 9H4z" fill="#bdbdbd" />
              </PageJump>
              <PageJump $mt={3} viewBox="0 0 24 22">
                <path d="M12 21l8-9H4zM12 12l8-9H4z" fill="#bdbdbd" />
              </PageJump>
            </Scrollbar>
            <Grip />
          </Workspace>
          <Notes>notes</Notes>
        </Window>
        <Toolbar>
          {bottomTools.map((t) => (
            <ToolItem key={t.label} $w={t.w} $ml={t.ml} $green={t.green}>
              <ToolIconSvg name={t.icon} />
              {t.label}
              {t.count && <ToolCount>{t.count}</ToolCount>}
              {t.caret && (
                <ToolCaret $x={t.caret} viewBox="0 0 12 8">
                  <path d="M1 7l5-5 5 5" fill="none" stroke="#a0a0a0" strokeWidth="1.800" />
                </ToolCaret>
              )}
            </ToolItem>
          ))}
        </Toolbar>
      </Meeting>
      <NameTag>
        <NameIcon viewBox="0 0 24 30">
          <rect x="1" y="3" width="22" height="17" rx="4" fill="#fff" />
          <path d="M12 20v6M7 27h10" stroke="#fff" strokeWidth="2.400" />
        </NameIcon>
        Rosun Sylphine
      </NameTag>
      <PenButton>
        <svg width="28" height="28" viewBox="0 0 24 24" fill="none" stroke="#49c06a" strokeWidth="2">
          <path d="M3 21l1.500-5.500L17 3l4 4L8.500 19.500zM14.500 5.500l4 4" />
        </svg>
      </PenButton>
    </Screen>
  );
};

export default App;
